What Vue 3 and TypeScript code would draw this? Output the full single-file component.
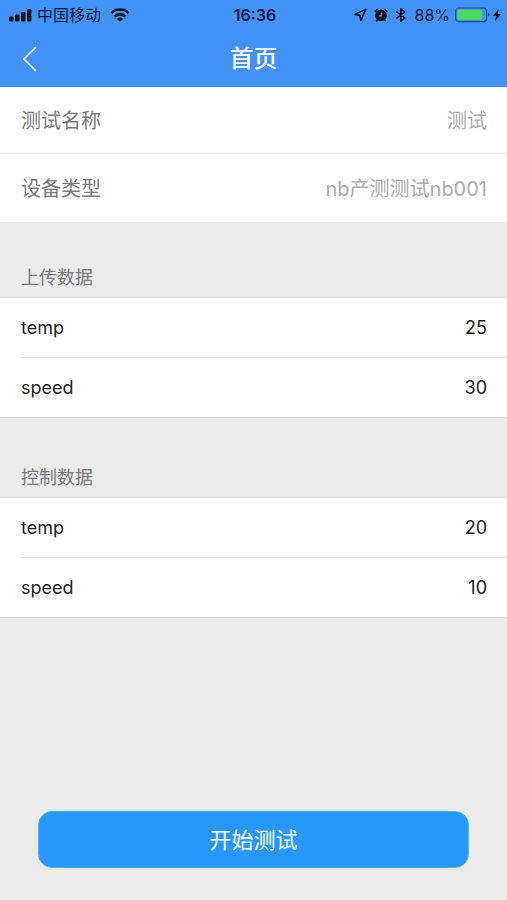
<script setup lang="ts">
interface Entry {
  label: string
  value: string
}

interface Section {
  title: string
  entries: Entry[]
}

const details: Entry[] = [
  { label: '测试名称', value: '测试' },
  { label: '设备类型', value: 'nb产测测试nb001' },
]

const sections: Section[] = [
  {
    title: '上传数据',
    entries: [
      { label: 'temp', value: '25' },
      { label: 'speed', value: '30' },
    ],
  },
  {
    title: '控制数据',
    entries: [
      { label: 'temp', value: '20' },
      { label: 'speed', value: '10' },
    ],
  },
]
</script>

<template>
  <div class="screen">
    <header class="top">
      <div class="status">
        <div class="carrier">
          <svg class="signal" viewBox="0 0 24 14" width="24" height="14" aria-hidden="true">
            <rect x="0" y="8.5" width="4.4" height="5" rx="1.2" />
            <rect x="6" y="6.5" width="4.4" height="7" rx="1.2" />
            <rect x="12" y="4" width="4.4" height="9.5" rx="1.2" />
            <rect x="18" y="1" width="4.4" height="12.5" rx="1.2" />
          </svg>
          <span>中国移动</span>
          <svg class="wifi" viewBox="0 0 20 14" width="20" height="14" aria-hidden="true">
            <path d="M1.2 5.2 A12.4 12.4 0 0 1 18.8 5.2" />
            <path d="M4.5 8.6 A7.8 7.8 0 0 1 15.5 8.6" />
            <path class="solid" d="M10 13.8 L6.9 10.9 A4.4 4.4 0 0 1 13.1 10.9 Z" />
          </svg>
        </div>
        <time class="clock">16:36</time>
        <div class="indicators">
          <svg viewBox="0 0 14 14" width="14" height="14" aria-hidden="true">
            <path class="line" d="M12.8 1.4 L1.8 6.4 L7 7.4 L7.8 12.6 Z" />
          </svg>
          <svg viewBox="0 0 14 14" width="14" height="14" aria-hidden="true">
            <circle cx="7" cy="7.4" r="5.8" />
            <path class="bell" d="M0.8 3.8 L3.6 1.2 M13.2 3.8 L10.4 1.2 M3.3 11.8 L2.2 13.2 M10.7 11.8 L11.8 13.2" />
            <path class="hands" d="M7.4 4.4 V7.8 H4.8" />
          </svg>
          <svg class="bluetooth" viewBox="0 0 12 16" width="12" height="16" aria-hidden="true">
            <path class="line" d="M1.4 4.6 L9.8 11 L5.8 14.2 V1.8 L9.8 5 L1.4 11.4" />
          </svg>
          <span class="percent">88%</span>
          <svg class="battery" viewBox="0 0 36 16" width="36" height="16" aria-hidden="true">
            <rect class="shell" x="0.6" y="1" width="31" height="13.6" rx="3" />
            <rect class="charge" x="2.4" y="2.8" width="24.8" height="10" rx="1" />
            <path class="cap" d="M33 5.8 Q34.6 6.4 34.6 7.8 Q34.6 9.2 33 9.8 Z" />
          </svg>
          <svg class="bolt" viewBox="0 0 8 12" width="8" height="12" aria-hidden="true">
            <path d="M5.8 0 L0 6.8 H3.3 L2.1 12 L8 4.9 H4.6 Z" />
          </svg>
        </div>
      </div>
      <nav class="nav">
        <button class="back" type="button" aria-label="返回">
          <svg viewBox="0 0 16 28" width="16" height="28" aria-hidden="true">
            <path d="M14 2 L2 14 L14 26" />
          </svg>
        </button>
        <h1>首页</h1>
      </nav>
    </header>

    <main class="content">
      <dl class="details">
        <div v-for="item in details" :key="item.label" class="detail">
          <dt>{{ item.label }}</dt>
          <dd>{{ item.value }}</dd>
        </div>
      </dl>

      <section v-for="section in sections" :key="section.title" class="section">
        <h2>{{ section.title }}</h2>
        <dl class="list">
          <div v-for="entry in section.entries" :key="entry.label" class="entry">
            <dt>{{ entry.label }}</dt>
            <dd>{{ entry.value }}</dd>
          </div>
        </dl>
      </section>
    </main>

    <footer class="actions">
      <button class="start" type="button">开始测试</button>
    </footer>
  </div>
</template>

<style>
body {
  margin: 0;
  background: #ebebeb;
}
</style>

<style scoped>
.screen {
  display: flex;
  flex-direction: column;
  box-sizing: border-box;
  min-height: 100vh;
  background: #ebebeb;
  color: #1c1c1c;
  font-family: Inter, "Noto Sans CJK SC", sans-serif;
}

.top {
  background: #4292f9;
}

.status {
  display: grid;
  grid-template-columns: 1fr auto 1fr;
  align-items: center;
  height: 30px;
  padding: 0 6px 0 9px;
  color: #0b1b3a;
  font-size: 16px;
  line-height: 20px;
}

.status svg {
  flex: none;
  fill: #06101f;
}

.carrier,
.indicators {
  display: flex;
  align-items: center;
  white-space: nowrap;
}

.carrier {
  gap: 4px;
}

.wifi {
  margin-left: 5px;
}

.wifi path {
  fill: none;
  stroke: #06101f;
  stroke-width: 2.6;
}

.wifi .solid {
  fill: #06101f;
  stroke: none;
}

.clock {
  font-weight: 600;
}

.indicators {
  justify-content: flex-end;
  gap: 7px;
}

.status .line {
  fill: none;
  stroke: #06101f;
  stroke-width: 1.5;
  stroke-linejoin: round;
}

.bell {
  stroke: #06101f;
  stroke-width: 1.8;
}

.status .hands {
  fill: none;
  stroke: #4292f9;
  stroke-width: 1.2;
}

.indicators .battery {
  margin-left: -2px;
}

.indicators .bolt {
  margin-left: -5px;
}

.battery .shell {
  fill: none;
  stroke: #1f4f92;
  stroke-width: 1.2;
}

.battery .charge {
  fill: #4cd964;
}

.battery .cap {
  fill: #1f4f92;
}

.nav {
  display: grid;
  grid-template-columns: 60px 1fr 60px;
  align-items: center;
  height: 57px;
  box-sizing: border-box;
}

.back {
  display: flex;
  align-items: center;
  height: 44px;
  padding: 0 22px;
  border: 0;
  background: none;
  cursor: pointer;
}

.back svg {
  flex: none;
  fill: none;
  stroke: #ffffff;
  stroke-width: 1.6;
}

h1 {
  margin: 0;
  color: #ffffff;
  font-size: 24px;
  font-weight: 500;
  line-height: 32px;
  text-align: center;
}

dl,
dd {
  margin: 0;
}

.details,
.list {
  background: #ffffff;
}

.detail,
.entry {
  display: flex;
  align-items: center;
  justify-content: space-between;
  box-sizing: border-box;
}

.detail {
  min-height: 66px;
  padding: 2px 20px 0 21px;
  font-size: 20px;
  line-height: 28px;
}

.detail + .detail {
  min-height: 69px;
  border-top: 1px solid #e9e9e9;
}

.detail dt {
  color: #7b7b7b;
}

.detail dd {
  color: #adadad;
}

.section h2 {
  margin: 0;
  padding: 43px 21px 6px;
  color: #7c7c7f;
  font-size: 18px;
  font-weight: 400;
  line-height: 26px;
}

.section + .section h2 {
  padding-top: 47px;
}

.list {
  border-top: 1px solid #dadada;
  border-bottom: 1px solid #dadada;
}

.entry {
  min-height: 59px;
  margin-left: 21px;
  padding-right: 20px;
  font-size: 18px;
  line-height: 24px;
}

.entry + .entry {
  min-height: 60px;
  border-top: 1px solid #e2e2e2;
}

.actions {
  margin-top: auto;
  padding: 32px 38px;
}

.start {
  display: block;
  width: 100%;
  height: 57px;
  padding: 0;
  border: 1px solid #58aef9;
  border-radius: 14px;
  background: #2897fb;
  color: #ffffff;
  font-family: inherit;
  font-size: 22px;
  line-height: 30px;
  cursor: pointer;
}
</style>
